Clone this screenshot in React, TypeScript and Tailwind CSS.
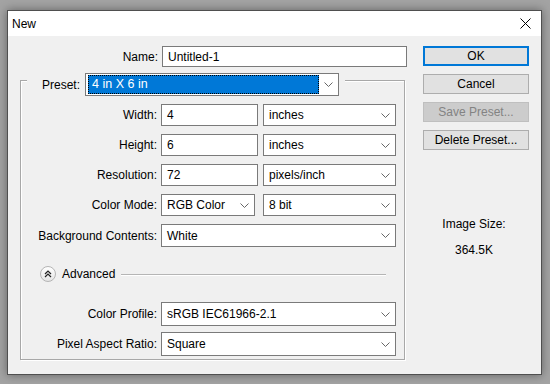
import React from "react";

const font = { fontFamily: '"Liberation Sans", Arial, sans-serif' };

function Chevron() {
  return (
    <svg width="9" height="5" viewBox="0 0 9 5" className="shrink-0">
      <path d="M0.5 0.5 L4.5 4.5 L8.5 0.5" fill="none" stroke="#666" strokeWidth="1" />
    </svg>
  );
}

function Select({ value, className }: { value: string; className: string }) {
  return (
    <div className={`flex items-center justify-between bg-white border border-[#7a7a7a] pl-[5px] pr-[5px] text-[12px] text-black ${className}`}>
      <span>{value}</span>
      <Chevron />
    </div>
  );
}

function Input({ value, className }: { value: string; className: string }) {
  return (
    <div className={`flex items-center bg-white border border-[#7a7a7a] pl-[5px] text-[12px] text-black ${className}`}>
      {value}
    </div>
  );
}

function Row({ label, children }: { label: string; children: React.ReactNode }) {
  return (
    <div className="flex items-center">
      <div className="w-[137px] text-right text-[12px] text-black pr-[1px]">{label}</div>
      <div className="ml-[3px] flex gap-[5px]">{children}</div>
    </div>
  );
}

function Button({ label, primary, disabled }: { label: string; primary?: boolean; disabled?: boolean }) {
  return (
    <div
      className={`h-[20px] w-[106px] flex items-center justify-center text-[12px] ${
        primary
          ? "border-2 border-[#0078d7] bg-[#e1e1e1] text-black"
          : disabled
          ? "border border-[#bfbfbf] bg-[#cccccc] text-[#838383]"
          : "border border-[#adadad] bg-[#e1e1e1] text-black"
      }`}
    >
      {label}
    </div>
  );
}

export default function App() {
  return (
    <div className="w-[550px] h-[384px] bg-[#a3a3a3] pt-[10px] pl-[7px] overflow-hidden" style={font}>
      <div className="w-[535px] h-[365px] border border-[#4f4f4f] flex flex-col shadow-[0_0_9px_rgba(0,0,0,0.4)]">
        {/* title bar */}
        <div className="h-[25px] bg-white flex items-center justify-between pl-[4px] pr-[10px]">
          <span className="text-[12px] text-black">New</span>
          <svg width="11" height="11" viewBox="0 0 11 11">
            <path d="M0.5 0.5 L10.5 10.5 M10.5 0.5 L0.5 10.5" stroke="#000" strokeWidth="1" />
          </svg>
        </div>

        <div className="flex-1 bg-[#f0f0f0] flex">
          {/* left column */}
          <div className="w-[399px] pt-[10px] pl-[12px]">
            <div className="flex items-center h-[21px]">
              <div className="w-[138px] text-right text-[12px] text-black">Name:</div>
              <Input value="Untitled-1" className="ml-[4px] w-[245px] h-[21px]" />
            </div>

            <div className="mt-[13px] w-[385px] h-[280px] border border-[#a8a8a8] shadow-[inset_1px_1px_0_#fff,1px_1px_0_#fff]">
              {/* preset row sits over the top line */}
              <div className="-mt-[8px] ml-[6px] w-[318px] flex items-center bg-[#f0f0f0] h-[23px]">
                <span className="pl-[15px] text-[12px] text-black">Preset:</span>
                <div className="ml-[5px] w-[254px] h-[23px] border border-[#7a7a7a] bg-white flex items-center pl-[2px] pr-[5px]">
                  <div className="w-[231px] h-[19px] bg-[#0078d7] border border-dotted border-black text-white text-[12.5px] flex items-center pl-[3px]">
                    4 in X 6 in
                  </div>
                  <div className="flex-1 flex justify-end">
                    <Chevron />
                  </div>
                </div>
              </div>

              <div className="mt-[8px] flex flex-col gap-[8px]">
                <Row label="Width:">
                  <Input value="4" className="w-[97px] h-[22px]" />
                  <Select value="inches" className="w-[133px] h-[22px]" />
                </Row>
                <Row label="Height:">
                  <Input value="6" className="w-[97px] h-[22px]" />
                  <Select value="inches" className="w-[133px] h-[22px]" />
                </Row>
                <Row label="Resolution:">
                  <Input value="72" className="w-[97px] h-[22px]" />
                  <Select value="pixels/inch" className="w-[133px] h-[22px]" />
                </Row>
                <Row label="Color Mode:">
                  <Select value="RGB Color" className="w-[94px] h-[22px]" />
                  <Select value="8 bit" className="ml-[3px] w-[133px] h-[22px]" />
                </Row>
                <Row label="Background Contents:">
                  <Select value="White" className="w-[235px] h-[23px]" />
                </Row>
              </div>

              {/* advanced */}
              <div className="mt-[19px] h-[16px] flex items-center pl-[19px]">
                <div className="w-[16px] h-[16px] rounded-full border border-[#b5b5b5] bg-gradient-to-b from-white to-[#e4e4e4] flex items-center justify-center">
                  <svg width="8" height="8" viewBox="0 0 8 8">
                    <path d="M1 4 L4 1 L7 4 M1 7 L4 4 L7 7" fill="none" stroke="#222" strokeWidth="1.2" />
                  </svg>
                </div>
                <span className="ml-[6px] text-[12px] text-black">Advanced</span>
                <div className="ml-[6px] w-[265px] h-px bg-[#b5b5b5] shadow-[0_1px_0_#fff]" />
              </div>

              <div className="mt-[20px] flex flex-col gap-[6px]">
                <Row label="Color Profile:">
                  <Select value="sRGB IEC61966-2.1" className="w-[235px] h-[24px]" />
                </Row>
                <Row label="Pixel Aspect Ratio:">
                  <Select value="Square" className="w-[235px] h-[24px]" />
                </Row>
              </div>
            </div>
          </div>

          {/* right column */}
          <div className="ml-[16px] pt-[10px] flex flex-col gap-[8px]">
            <Button label="OK" primary />
            <Button label="Cancel" />
            <Button label="Save Preset..." disabled />
            <Button label="Delete Preset..." />
            <div className="mt-[57px] flex flex-col items-center gap-[8px] text-[12px] text-black w-[102px]">
              <span>Image Size:</span>
              <span>364.5K</span>
            </div>
          </div>
        </div>
      </div>
    </div>
  );
}
